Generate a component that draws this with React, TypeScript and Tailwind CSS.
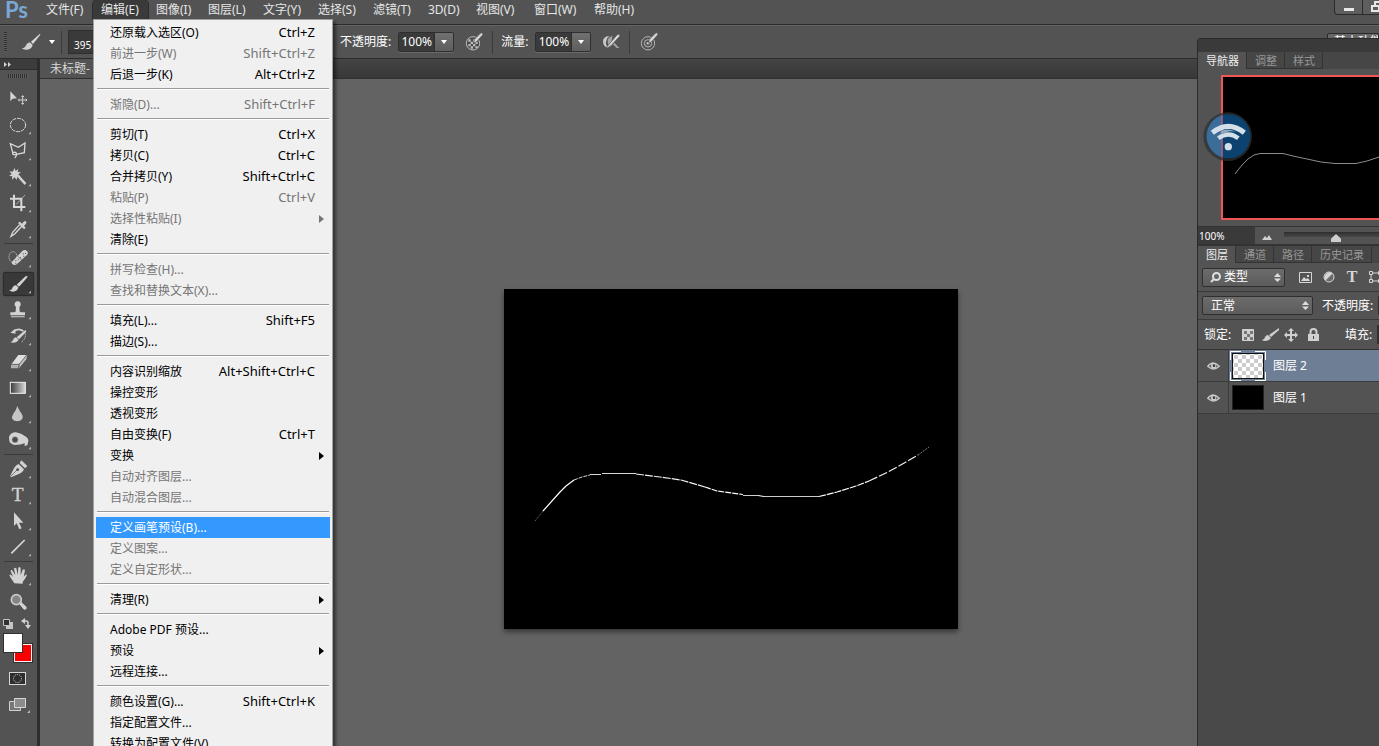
// src/App.tsx
import React from 'react';

interface MenuEntry {
  label: string;
  keys?: string;
  disabled?: boolean;
  active?: boolean;
  sub?: boolean;
}

const EDIT_MENU: MenuEntry[][] = [
  [
    { label: '还原载入选区(O)', keys: 'Ctrl+Z' },
    { label: '前进一步(W)', keys: 'Shift+Ctrl+Z', disabled: true },
    { label: '后退一步(K)', keys: 'Alt+Ctrl+Z' },
  ],
  [{ label: '渐隐(D)...', keys: 'Shift+Ctrl+F', disabled: true }],
  [
    { label: '剪切(T)', keys: 'Ctrl+X' },
    { label: '拷贝(C)', keys: 'Ctrl+C' },
    { label: '合并拷贝(Y)', keys: 'Shift+Ctrl+C' },
    { label: '粘贴(P)', keys: 'Ctrl+V', disabled: true },
    { label: '选择性粘贴(I)', disabled: true, sub: true },
    { label: '清除(E)' },
  ],
  [
    { label: '拼写检查(H)...', disabled: true },
    { label: '查找和替换文本(X)...', disabled: true },
  ],
  [
    { label: '填充(L)...', keys: 'Shift+F5' },
    { label: '描边(S)...' },
  ],
  [
    { label: '内容识别缩放', keys: 'Alt+Shift+Ctrl+C' },
    { label: '操控变形' },
    { label: '透视变形' },
    { label: '自由变换(F)', keys: 'Ctrl+T' },
    { label: '变换', sub: true },
    { label: '自动对齐图层...', disabled: true },
    { label: '自动混合图层...', disabled: true },
  ],
  [
    { label: '定义画笔预设(B)...', active: true },
    { label: '定义图案...', disabled: true },
    { label: '定义自定形状...', disabled: true },
  ],
  [{ label: '清理(R)', sub: true }],
  [
    { label: 'Adobe PDF 预设...' },
    { label: '预设', sub: true },
    { label: '远程连接...' },
  ],
  [
    { label: '颜色设置(G)...', keys: 'Shift+Ctrl+K' },
    { label: '指定配置文件...' },
    { label: '转换为配置文件(V)...' },
  ],
];

const MENUS = [
  { label: '文件(F)', width: 'w-[55px]' },
  { label: '编辑(E)', width: 'w-[55px]' },
  { label: '图像(I)', width: 'w-[52px]' },
  { label: '图层(L)', width: 'w-[55px]' },
  { label: '文字(Y)', width: 'w-[55px]' },
  { label: '选择(S)', width: 'w-[55px]' },
  { label: '滤镜(T)', width: 'w-[55px]' },
  { label: '3D(D)', width: 'w-12' },
  { label: '视图(V)', width: 'w-[58px]' },
  { label: '窗口(W)', width: 'w-[60px]' },
  { label: '帮助(H)', width: 'w-[60px]' },
];

const EditMenu: React.FC = () => (
  <div className="absolute left-0 top-[19px] z-30 w-60 border border-[#a0a0a0] bg-[#f0f0f0] px-[2px] py-[2px] text-black shadow-[3px_3px_3px_rgba(0,0,0,0.45)]">
    {EDIT_MENU.map((group, i) => (
      <React.Fragment key={i}>
        {i > 0 && <div className="mx-px mt-[3px] mb-1 h-[2px] border-t border-[#9a9a9a] bg-white" />}
        {group.map(item => (
          <button
            key={item.label}
            disabled={item.disabled}
            className={`flex h-[21px] w-full items-center pl-[14px] pr-[6px] ${item.active ? 'bg-[#3399ff] text-white' : item.disabled ? 'text-[#757575]' : 'text-black'}`}
          >
            <span>{item.label}</span>
            <span className="ml-auto mr-[9px] text-[13px]">{item.keys}</span>
            {item.sub && (
              <svg width="5" height="8" viewBox="0 0 5 8" className="-ml-[5px]"><path d="M0 0L5 4L0 8Z" fill="currentColor" /></svg>
            )}
          </button>
        ))}
      </React.Fragment>
    ))}
  </div>
);

const MenuBar: React.FC = () => (
  <header className="flex h-[25px] shrink-0 items-start border-b border-[#2b2b2b] pl-[5px]">
    <span className="w-[33px] font-[Lato] text-[22px] leading-[19px] font-bold text-[#7ba7d4]">Ps</span>
    <nav className="flex">
      {MENUS.map((m, i) => (
        <div key={m.label} className={`shrink-0 ${m.width} ${i === 1 ? 'relative' : ''}`}>
          <button className={`h-[19px] w-full pl-2 text-left text-[#e6e6e6] ${i === 1 ? 'rounded-t-sm bg-[#3a3a3a] outline outline-[#2c2c2c]' : ''}`}>{m.label}</button>
          {i === 1 && <EditMenu />}
        </div>
      ))}
    </nav>
    <div className="ml-auto flex h-[15px] w-[45px] shrink-0 overflow-hidden rounded-bl-sm border-b border-l border-[#2b2b2b] bg-[#5e5e5e]">
      <button aria-label="最小化" className="flex h-[14px] w-7 shrink-0 items-center justify-center border-r border-[#2b2b2b]">
        <svg width="10" height="10" viewBox="0 0 10 10"><path d="M0 6H10V9H0Z" fill="#e8e8e8" /></svg>
      </button>
      <button aria-label="还原" className="flex h-[14px] w-7 shrink-0 items-center justify-center">
        <svg width="13" height="12" viewBox="0 0 13 12" fill="none" stroke="#e8e8e8" strokeWidth="2"><path d="M4 4V1H12V7H9M1 5H8V10H1Z" /></svg>
      </button>
    </div>
  </header>
);

const Percent: React.FC<{ id: string; label: string }> = ({ id, label }) => (
  <div className="flex shrink-0 items-center">
    <label htmlFor={id} className="whitespace-nowrap text-white">{label}</label>
    <div className="ml-[7px] flex h-5 overflow-hidden rounded-[2px] border border-[#2e2e2e] shadow-[0_1px_0_#6a6a6a]">
      <input id={id} defaultValue="100%" className="w-[35px] bg-[#3a3a3a] text-center text-white" />
      <button aria-label="展开" className="flex w-[19px] items-center justify-center border-l border-[#2e2e2e] bg-linear-to-b from-[#707070] to-[#5e5e5e]">
        <svg width="6" height="4" viewBox="0 0 6 4"><path d="M0 0H6L3 4Z" fill="#fff" /></svg>
      </button>
    </div>
  </div>
);

const Pen = () => (
  <path d="M28 22L46 4Q50 1 53 4Q55 8 51 11L35 29L26 34Z" fill="#d4d4d4" stroke="#484848" strokeWidth="2" />
);

const OptionsBar: React.FC = () => (
  <div className="flex h-[34px] shrink-0 items-center border-t border-b border-t-[#646464] border-b-[#2b2b2b] bg-[#535353]">
    <div className="flex w-[340px] shrink-0 items-center">
      <div className="ml-1 h-5 w-[3px] bg-[repeating-linear-gradient(#2f2f2f_0_1px,#5f5f5f_1px_2px)]" />
      <button aria-label="画笔预设" className="ml-[14px] flex items-center gap-2">
        <svg width="20" height="18" viewBox="0 0 60 54">
          <path d="M57 2L30 26L36 33L58 5Z" fill="#dcdcdc" />
          <path d="M27 28L35 36Q32 49 18 50Q8 51 2 46Q12 46 15 37Q18 29 27 28Z" fill="#d0d0d0" />
        </svg>
        <svg width="6" height="4" viewBox="0 0 6 4"><path d="M0 0H6L3 4Z" fill="#fff" /></svg>
      </button>
      <div className="ml-[6px] h-[23px] border-l border-[#3a3a3a]" />
      <button className="ml-[6px] flex h-6 w-10 items-end border border-[#2e2e2e] bg-[#3a3a3a] pl-[5px] text-[10px] leading-4 text-white">395</button>
    </div>
    <Percent id="opt-opacity" label="不透明度:" />
    <svg className="ml-[11px] shrink-0" width="19" height="20" viewBox="0 0 57 60">
      <circle cx="24" cy="34" r="20" fill="#4a4a4a" stroke="#bdbdbd" strokeWidth="3" />
      <path d="M10 22h7v7h-7zM24 22h7v7h-7zM17 29h7v7h-7zM31 29h7v7h-7zM10 36h7v7h-7zM24 36h7v7h-7zM17 43h7v7h-7zM31 43h7v6h-7z" fill="#bdbdbd" />
      <Pen />
    </svg>
    <div className="mx-2 h-[23px] border-l border-[#3a3a3a]" />
    <Percent id="opt-flow" label="流量:" />
    <svg className="ml-[11px] shrink-0" width="19" height="20" viewBox="0 0 57 60">
      <path d="M22 12Q2 14 3 30Q4 45 20 48Q10 38 12 29Q13 18 22 12Z" fill="#c8c8c8" />
      <path d="M32 12Q16 15 17 30Q18 40 24 44L33 35Q27 24 32 12ZM37 32L52 48L44 48L33 37Z" fill="#a4a4a4" />
      <path d="M15 44L44 10Q50 4 54 10Q54 14 49 17L27 41L12 50Z" fill="#dadada" stroke="#484848" strokeWidth="2" />
    </svg>
    <div className="mr-[10px] ml-2 h-[23px] border-l border-[#3a3a3a]" />
    <svg className="shrink-0" width="19" height="20" viewBox="0 0 57 60">
      <circle cx="24" cy="34" r="20" fill="none" stroke="#b4b4b4" strokeWidth="3" />
      <circle cx="24" cy="34" r="11" fill="none" stroke="#b4b4b4" strokeWidth="3" />
      <circle cx="24" cy="34" r="4" fill="#c4c4c4" />
      <Pen />
    </svg>
    <button className="ml-auto h-[19px] w-[52px] shrink-0 overflow-hidden rounded-[2px] border border-[#2b2b2b] bg-[#686868] pl-[6px] text-left whitespace-nowrap text-white">基本功能</button>
  </div>
);

// every tool glyph is drawn on a 96x78 grid
const BRUSH = (
  <>
    <path d="M76 15Q72 14 69 17L44 41L51 47L75 20Q77 17 76 15Z" />
    <path d="M42 43L49 49Q46 62 33 62Q27 62 21 58Q30 58 32 49Q35 43 42 43Z" />
  </>
);

const TOOLS: { name: string; icon: React.ReactNode; active?: boolean; single?: boolean; line?: boolean }[] = [
  {
    name: '移动', single: true,
    icon: <><path d="M25 16V46L32 38L45 37Z" /><path d="M62 29V55M49 42H75M58 33L62 29L66 33M58 51L62 55L66 51M53 38L49 42L53 46M71 38L75 42L71 46" fill="none" stroke="#cfcfcf" strokeWidth="3" /></>,
  },
  { name: '椭圆选框', icon: <ellipse cx="48" cy="39" rx="23" ry="20" fill="none" stroke="#dedede" strokeWidth="3" strokeDasharray="11 3" /> },
  { name: '多边形套索', icon: <path d="M33 47L25 17L49 28L69 15L67 44L40 50Q29 51 33 44Q42 40 44 49Q44 55 38 60" fill="none" stroke="#d8d8d8" strokeWidth="4" /> },
  {
    name: '魔棒',
    icon: <><path d="M38 12L41 21L49 15L47 24L57 25L49 31L56 39L46 38L44 48L38 40L30 47L31 37L21 36L29 30L22 22L32 23Z" /><path d="M46 38L51 34L73 57L68 63Z" /></>,
  },
  { name: '裁剪', icon: <><path d="M36 14V51H70M24 26H58V64" fill="none" stroke="#d8d8d8" strokeWidth="6" /><path d="M69 15L42 44" stroke="#d8d8d8" strokeWidth="2" /></> },
  {
    name: '吸管', line: true,
    icon: <><path d="M60 30L38 54L27 61L32 49L53 26" fill="none" stroke="#dadada" strokeWidth="4" /><path d="M48 21L54 17L60 23Q67 12 72 16Q76 21 66 30L71 35L66 40Z" /></>,
  },
  {
    name: '污点修复画笔',
    icon: <><ellipse cx="33" cy="36" rx="12" ry="16" fill="none" stroke="#dcdcdc" strokeWidth="3" strokeDasharray="3 3" /><path d="M33 47L61 18Q68 12 75 18Q80 24 75 30L45 57Q37 63 31 57Q27 52 33 47Z" /><path d="M48 34L59 45" stroke="#555" strokeWidth="2" /><path d="M40 46h3v3h-3zM47 43h3v3h-3zM40 53h3v3h-3zM62 25h3v3h-3zM69 24h3v3h-3zM64 32h3v3h-3zM54 37h3v3h-3z" fill="#4a4a4a" /></>,
  },
  { name: '画笔', active: true, icon: BRUSH },
  {
    name: '仿制图章',
    icon: <><circle cx="47" cy="22" r="9" /><path d="M42 28H52L53 43Q53 46 58 46H69V55H25V46H36Q41 46 41 43ZM27 58H68V61H27Z" /></>,
  },
  {
    name: '历史记录画笔',
    icon: <><path d="M33 28Q46 12 64 24" fill="none" stroke="#d2d2d2" strokeWidth="5" /><path d="M25 29L39 18L41 32ZM70 21L73 26L51 49L44 43ZM42 43L50 50Q43 62 25 58Q33 57 34 49Q36 44 42 43Z" /><path d="M70 32Q72 49 57 58" fill="none" stroke="#e6e6e6" strokeWidth="3" strokeDasharray="3 3" /></>,
  },
  {
    name: '橡皮擦',
    icon: <><path d="M27 47L49 18H75L54 44Z" fill="#e0e0e0" /><path d="M27 47L54 44L50 58H27Z" fill="#b0b0b0" /><path d="M54 44L75 18L73 31L51 58Z" fill="#c2c2c2" /><path d="M27 46H51L74 18M51 46L49 58" fill="none" stroke="#4a4a4a" strokeWidth="2" /></>,
  },
  { name: '渐变', icon: <><defs><linearGradient id="ramp"><stop stopColor="#3a3a3a" /><stop offset="1" stopColor="#d6d6d6" /></linearGradient></defs><rect x="25" y="22" width="45" height="33" fill="url(#ramp)" stroke="#f0f0f0" strokeWidth="3" /></> },
  { name: '模糊', icon: <path d="M46 15Q50 26 58 37Q65 48 60 55Q55 61 46 61Q36 61 31 54Q28 47 34 38Q43 27 46 15Z" fill="#c6c6c6" /> },
  {
    name: '海绵', line: true,
    icon: <><path d="M21 30Q25 16 42 16Q57 18 72 29Q82 37 78 46L76 55L68 57L68 49Q56 54 39 54Q25 51 22 42Z" /><circle cx="39" cy="38" r="9" fill="#4a4a4a" stroke="#999" strokeWidth="2" /></>,
  },
  {
    name: '钢笔',
    icon: <><path d="M53 21L58 13L76 30L69 37Z" /><path d="M50 24L66 40Q60 53 45 56L27 64L24 61L33 43Q38 29 50 24Z" /><path d="M25 62L46 41" stroke="#484848" strokeWidth="2" /><circle cx="47" cy="41" r="4" fill="#484848" /></>,
  },
  { name: '横排文字', icon: <text x="47" y="56" textAnchor="middle" fontFamily="Liberation Serif, serif" fontSize="58" stroke="#d3d3d3" strokeWidth="1">T</text> },
  { name: '路径选择', icon: <path d="M36 13V54L44 46L52 64L59 61L51 44H64Z" /> },
  { name: '直线', line: true, icon: <path d="M28 58L68 18" stroke="#d8d8d8" strokeWidth="5" /> },
  {
    name: '抓手',
    icon: <path d="M37 61L25 43Q21 36 23 35Q27 33 34 43L26 25Q26 20 30 21L40 37L36 17Q38 12 43 16L47 36L49 14Q52 10 56 15L56 37L62 20Q67 17 69 22L65 41Q70 35 74 34Q76 37 71 44L62 57V62Z" />,
  },
  {
    name: '缩放', single: true,
    icon: <><circle cx="43" cy="32" r="15" fill="#858585" stroke="#c9c9c9" strokeWidth="5" /><path d="M51 44L57 38L73 53Q76 58 72 61Q68 64 64 60Z" /></>,
  },
];

const Toolbox: React.FC = () => (
  <aside className="w-10 shrink-0 border-r-3 border-[#2d2d2d] bg-[#535353]">
    <div className="h-[11px] border-b border-[#2d2d2d] bg-[#3c3c3c] pt-[3px] pl-1">
      <svg width="8" height="5" viewBox="0 0 8 5"><path d="M0 0L3 2.5L0 5ZM4 0L7 2.5L4 5Z" fill="#d0d0d0" /></svg>
    </div>
    <div className="mt-1 ml-2 h-1 w-5 bg-[repeating-linear-gradient(90deg,#2f2f2f_0_1px,#5f5f5f_1px_2px)]" />
    <div className="mt-2">
      {TOOLS.map(t => (
        <React.Fragment key={t.name}>
          <button aria-label={t.name} className="block h-[26px] w-full pl-[2px]">
            <svg width="33" height="26" viewBox="0 0 99 78" fill="#d3d3d3">
              {t.active && <rect x="4" y="4" width="91" height="70" rx="4" fill="#393939" stroke="#292929" strokeWidth="3" />}
              {t.icon}
              {!t.single && <path d="M87 59V67H79Z" fill="#b4b4b4" />}
            </svg>
          </button>
          {t.line && <div className="mx-1 my-px h-px bg-[#3a3a3a]" />}
        </React.Fragment>
      ))}
    </div>
    <svg width="36" height="116" viewBox="0 0 36 116">
      <path d="M6 7H13V14H6Z" fill="#c4c4c4" />
      <path d="M3.500 4.500H9.500V10.500H3.500Z" fill="#303030" stroke="#c4c4c4" />
      <path d="M24 6H26Q28 6 28 8V11" fill="none" stroke="#d0d0d0" strokeWidth="1.500" />
      <path d="M21 6L25 3V9ZM25 10H31L28 14Z" fill="#d0d0d0" />
      <rect x="13.500" y="28.500" width="19" height="19" fill="#fb0000" stroke="#303030" />
      <rect x="14.500" y="29.500" width="17" height="17" fill="#fb0000" stroke="#f4f4f4" />
      <rect x="3.500" y="18.500" width="19" height="19" fill="#fff" stroke="#303030" />
      <rect x="9.500" y="57.500" width="16" height="12" fill="#2e2e2e" stroke="#d6d6d6" />
      <circle cx="17.500" cy="63.500" r="4" fill="none" stroke="#d6d6d6" strokeDasharray="1 1" />
      <path d="M9.500 86.500H20.500V95.500H9.500Z" fill="#777" stroke="#d0d0d0" />
      <path d="M14.500 83.500H25.500V92.500H14.500Z" fill="#8c8c8c" stroke="#d8d8d8" />
      <path d="M30 95V98H27Z" fill="#b4b4b4" />
    </svg>
  </aside>
);

const Canvas: React.FC = () => (
  <main className="flex min-w-0 flex-1 flex-col">
    <div className="flex h-5 shrink-0 border-b border-[#303030] bg-linear-to-b from-[#444] to-[#383838]">
      <button className="w-[180px] shrink-0 bg-[#535353] pl-[10px] text-left text-[#d8d8d8]">未标题-</button>
    </div>
    <div className="flex min-h-0 flex-1 items-center justify-center bg-[#636363] pt-[93px] pl-[224px]">
      <svg className="h-[340px] w-[454px] shrink-0 bg-black shadow-[0_3px_5px_rgba(0,0,0,0.45)]" viewBox="0 0 454 340" fill="none" strokeWidth="1">
        <path d="M31 232L39 222" stroke="#777" strokeDasharray="1 1" />
        <path d="M39 222L56 203L62 197L70 191" stroke="#fff" strokeWidth="1.200" />
        <path d="M70 191L78 188L86 186" stroke="#d5d5d5" strokeDasharray="4 1" />
        <path d="M86 185.500H97M98 184.500H132" stroke="#d8d8d8" />
        <path d="M132 185L156 188L177 191L201 198" stroke="#f0f0f0" strokeWidth="1.200" strokeDasharray="8 1" />
        <path d="M201 198L213 202L239 205.500" stroke="#fff" strokeWidth="1.200" strokeDasharray="6 1" />
        <path d="M239 206.500H254M260 207.500H315" stroke="#ccc" />
        <path d="M254 206.500L260 207.500" stroke="#fff" />
        <path d="M315 207.500L333 203L352 197L365 192" stroke="#fff" strokeWidth="1.200" strokeDasharray="7 1" />
        <path d="M365 192L384 183L402 173L414 166" stroke="#f0f0f0" strokeWidth="1.200" strokeDasharray="9 2" />
        <path d="M414 166L425 158" stroke="#777" strokeDasharray="2 1" />
      </svg>
    </div>
  </main>
);

const Tabs: React.FC<{ items: string[] }> = ({ items }) => (
  <div className="flex h-[17px] shrink-0 overflow-hidden bg-[#464646] text-[11px]">
    {items.map((t, i) => (
      <button key={t} className={`shrink-0 border-r border-[#333] pr-[7px] pl-2 leading-[17px] whitespace-nowrap ${i === 0 ? 'bg-[#535353] text-[#eee]' : 'border-b bg-[#464646] text-[#989898]'}`}>{t}</button>
    ))}
  </div>
);

const Sort = () => (
  <svg className="pointer-events-none absolute top-[5px] right-1" width="7" height="9" viewBox="0 0 7 9"><path d="M0 4L3.500 0L7 4ZM0 5.500H7L3.500 9Z" fill="#ddd" /></svg>
);

const SELECT = 'block h-[19px] w-full appearance-none rounded-[2px] border border-[#2f2f2f] bg-linear-to-b from-[#6c6c6c] to-[#5c5c5c] text-white';

const Eye = () => (
  <button aria-label="显示图层" className="flex h-full w-[31px] shrink-0 items-center justify-center border-r border-[#3b3b3b] bg-[#535353]">
    <svg width="13" height="10" viewBox="0 0 39 30">
      <path d="M2 16Q18 -4 37 16Q20 32 2 16Z" fill="#5c5c5c" stroke="#c6c6c6" strokeWidth="4" />
      <circle cx="20" cy="14" r="8" fill="#d0d0d0" /><circle cx="21" cy="14" r="4" fill="#333" />
    </svg>
  </button>
);

const Panels: React.FC = () => (
  <aside className="relative z-10 -mt-[21px] flex w-[182px] shrink-0 flex-col overflow-hidden rounded-tl border-t border-l border-[#2b2b2b] bg-[#494949]">
    <div className="h-[13px] shrink-0 bg-[#3a3a3a]" />
    <Tabs items={['导航器', '调整', '样式']} />
    {/* NAVIGATOR */}
    <div className="h-[158px] shrink-0 border-b border-[#333] bg-[#535353] pt-[6px] pl-[23px]">
      <svg width="190" height="145" viewBox="0 0 190 145" fill="none">
        <rect width="190" height="145" fill="#000" />
        <path d="M1 1H190M1 0V145M0 144H190" stroke="#f05656" strokeWidth="2" />
        <path d="M14 99L17 95L22 89L27 84L33 80L39 78.500H62L72 81L86 84L100 87L114 88.500H135L146 86L158 82" stroke="#8c8c8c" />
      </svg>
    </div>
    <div className="flex h-[17px] shrink-0 items-center bg-[#535353]">
      <input aria-label="缩放比例" defaultValue="100%" className="h-full w-[57px] shrink-0 bg-[#3a3a3a] pl-px text-[10px] text-white" />
      <svg className="mt-1 ml-[7px] shrink-0" width="10" height="5" viewBox="0 0 10 5"><path d="M0 5L3 1L5 3L7 0L10 5Z" fill="#d0d0d0" /></svg>
      <input
        type="range"
        aria-label="缩放"
        defaultValue={50}
        className="ml-3 h-4 w-[104px] shrink-0 appearance-none bg-[linear-gradient(#2e2e2e,#484848)] bg-[length:100%_5px] bg-[position:0_4px] bg-no-repeat [&::-webkit-slider-thumb]:mt-[5px] [&::-webkit-slider-thumb]:h-2 [&::-webkit-slider-thumb]:w-[10px] [&::-webkit-slider-thumb]:appearance-none [&::-webkit-slider-thumb]:bg-[#cfcfcf] [&::-webkit-slider-thumb]:[clip-path:polygon(50%_0,100%_60%,100%_100%,0_100%,0_60%)]"
      />
    </div>
    {/* LAYERS */}
    <div className="shrink-0 border-t-2 border-[#333]"><Tabs items={['图层', '通道', '路径', '历史记录']} /></div>
    <div className="flex h-[29px] shrink-0 items-center border-b border-[#3a3a3a] bg-[#535353] pl-1">
      <div className="relative w-[83px] shrink-0">
        <select aria-label="滤镜类型" className={`${SELECT} pl-[21px]`}><option>类型</option></select>
        <svg className="pointer-events-none absolute top-1 left-2" width="11" height="11" viewBox="0 0 11 11" fill="none" stroke="#e0e0e0" strokeWidth="2"><circle cx="6.500" cy="4.500" r="3.500" /><path d="M4 7L1 10" /></svg>
        <Sort />
      </div>
      <div className="ml-[14px] flex shrink-0 items-center gap-[11px]">
        <svg width="13" height="11" viewBox="0 0 13 11"><path d="M.5 .5H12.500V10.500H.5Z" fill="none" stroke="#d6d6d6" /><path d="M2 9L5 5L7 7L9 6L11 9ZM8 3h2v2h-2z" fill="#d6d6d6" /></svg>
        <svg width="12" height="12" viewBox="0 0 12 12"><circle cx="6" cy="6" r="5" fill="#6a6a6a" stroke="#d6d6d6" /><path d="M2.500 9.500A5 5 0 0 1 9.500 2.500Z" fill="#d6d6d6" /></svg>
        <span className="w-3 text-center font-['Liberation_Serif'] text-base leading-4 font-bold text-[#d6d6d6]">T</span>
        <svg width="13" height="12" viewBox="0 0 13 12" fill="#535353" stroke="#d6d6d6"><path d="M2 2H11V10H2Z" /><path d="M.5 .5h3v3h-3zM9.500 .5h3v3h-3zM.5 8.500h3v3h-3zM9.500 8.500h3v3h-3z" /></svg>
      </div>
    </div>
    <div className="flex h-[28px] shrink-0 items-center border-b border-[#3a3a3a] bg-[#535353] pl-1">
      <div className="relative w-[111px] shrink-0">
        <select aria-label="混合模式" className={`${SELECT} pl-2`}><option>正常</option></select>
        <Sort />
      </div>
      <label htmlFor="layer-opacity" className="ml-[9px] w-[56px] shrink-0 whitespace-nowrap text-white">不透明度:</label>
      <input id="layer-opacity" defaultValue="100%" className="h-[19px] w-10 shrink-0 bg-[#303030] pl-2 text-white" />
    </div>
    <div className="flex h-[30px] shrink-0 items-center border-b border-[#333] bg-[#535353] pl-[6px]">
      <span className="w-[38px] shrink-0 whitespace-nowrap text-white">锁定:</span>
      <svg className="shrink-0" width="82" height="14" viewBox="0 0 82 14" fill="#d0d0d0">
        <path d="M0.500 1.500H11.500V12.500H0.500Z" stroke="#d0d0d0" />
        <path d="M2 3h3v3h-3zM8 3h3v3h-3zM5 6h3v3h-3zM2 9h3v3h-3zM8 9h3v3h-3z" fill="#777" />
        <path d="M37 0L27 7L29 9L37 2ZM26 7L29 10Q27 13 24 13Q21 13 20 12Q23 11 23 9Q24 7 26 7Z" />
        <path d="M49 0L52 3H50V6H53V4L56 7L53 10V8H50V11H52L49 14L46 11H48V8H45V10L42 7L45 4V6H48V3H46Z" />
        <path d="M66 6H77V13H66Z" /><path d="M68.500 7V4Q68.500 1 71.500 1Q74.500 1 74.500 4V7" fill="none" stroke="#d0d0d0" strokeWidth="2" /><path d="M71 8h1v3h-1z" fill="#444" />
      </svg>
      <label htmlFor="layer-fill" className="ml-[21px] w-[32px] shrink-0 whitespace-nowrap text-white">填充:</label>
      <input id="layer-fill" defaultValue="100%" className="h-[19px] w-10 shrink-0 bg-[#303030] pl-2 text-white" />
    </div>
    <div className="flex h-8 shrink-0 items-center border-b border-[#3b3b3b] bg-[#6d7e95] text-white">
      <Eye />
      <svg className="ml-px shrink-0" width="36" height="30" viewBox="0 0 36 30">
        <defs><pattern id="chk" width="8" height="8" patternUnits="userSpaceOnUse"><rect width="8" height="8" fill="#fff" /><path d="M0 0h4v4h-4zM4 4h4v4h-4z" fill="#ccc" /></pattern></defs>
        <rect x="2.500" y="2.500" width="31" height="25" fill="url(#chk)" stroke="#111" />
        <path d="M.5 9V.5H11M25 .5H35.500V9M35.500 21V29.500H25M11 29.500H.5V21" fill="none" stroke="#fff" />
      </svg>
      <span className="ml-[7px]">图层 2</span>
    </div>
    <div className="flex h-8 shrink-0 items-center border-b border-[#3b3b3b] bg-[#535353] text-white">
      <Eye />
      <div className="ml-[3px] h-[25px] w-8 shrink-0 border border-[#222] bg-black" />
      <span className="ml-[9px]">图层 1</span>
    </div>
  </aside>
);

export default function App() {
  return (
    <div className="relative flex h-screen flex-col overflow-hidden bg-[#535353] font-['Noto_Sans','Noto_Sans_CJK_SC',sans-serif] text-xs">
      <MenuBar />
      <OptionsBar />
      <div className="flex min-h-0 flex-1">
        <Toolbox />
        <Canvas />
        <Panels />
      </div>
      {/* wifi helper bubble floats above the panels */}
      <svg className="absolute top-[112px] right-[126px] z-20" width="50" height="50" viewBox="0 0 150 150">
        <circle cx="74" cy="74" r="73" fill="#303030" fillOpacity="0.75" />
        <circle cx="76" cy="73" r="66" fill="#0c426f" />
        <path d="M57 10A66 66 0 0 0 57 136Z" fill="#3b6d98" />
        <path d="M57 10V136" stroke="#a55c80" strokeWidth="5" />
        <g fill="none" stroke="#d3dfe9">
          <path d="M28 62Q76 24 124 62" strokeWidth="15" />
          <path d="M46 79Q76 56 106 79" strokeWidth="13" />
        </g>
        <path d="M51 60Q73 45 101 61Q76 52 61 67Z" fill="#91a9bd" />
        <circle cx="76" cy="104" r="11" fill="#d3dfe9" />
      </svg>
    </div>
  );
}
